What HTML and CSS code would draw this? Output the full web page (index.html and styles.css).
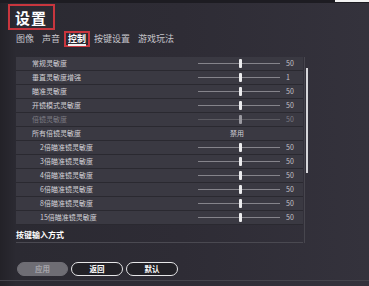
FILE: index.html
```html
<!DOCTYPE html>
<html lang="zh">
<head>
<meta charset="utf-8">
<link rel="stylesheet" href="styles.css">
</head>
<body>
<div class="screen">
  <div class="topbar"><div class="topbar-white"></div></div>
  <div class="title-box">设置</div>
  <div class="tabs">
    <div class="tab">图像</div>
    <div class="tab">声音</div>
    <div class="tab active"><span class="tab-u">控制</span></div>
    <div class="tab">按键设置</div>
    <div class="tab">游戏玩法</div>
  </div>
  <div class="main">
    <div class="panel">
      <div class="row"><div class="label">常规灵敏度</div><div class="slider"><div class="track-l"></div><div class="thumb"></div><div class="track-r"></div></div><div class="value">50</div></div>
      <div class="row"><div class="label">垂直灵敏度增强</div><div class="slider"><div class="track-l"></div><div class="thumb"></div><div class="track-r"></div></div><div class="value">1</div></div>
      <div class="row"><div class="label">瞄准灵敏度</div><div class="slider"><div class="track-l"></div><div class="thumb"></div><div class="track-r"></div></div><div class="value">50</div></div>
      <div class="row"><div class="label">开镜模式灵敏度</div><div class="slider"><div class="track-l"></div><div class="thumb"></div><div class="track-r"></div></div><div class="value">50</div></div>
      <div class="row dim"><div class="label">倍镜灵敏度</div><div class="slider"><div class="track-l"></div><div class="thumb"></div><div class="track-r"></div></div><div class="value">50</div></div>
      <div class="row"><div class="label">所有倍镜灵敏度</div><div class="toggle">禁用</div><div class="value"></div></div>
      <div class="row sub"><div class="label">2倍瞄准镜灵敏度</div><div class="slider"><div class="track-l"></div><div class="thumb"></div><div class="track-r"></div></div><div class="value">50</div></div>
      <div class="row sub"><div class="label">3倍瞄准镜灵敏度</div><div class="slider"><div class="track-l"></div><div class="thumb"></div><div class="track-r"></div></div><div class="value">50</div></div>
      <div class="row sub"><div class="label">4倍瞄准镜灵敏度</div><div class="slider"><div class="track-l"></div><div class="thumb"></div><div class="track-r"></div></div><div class="value">50</div></div>
      <div class="row sub"><div class="label">6倍瞄准镜灵敏度</div><div class="slider"><div class="track-l"></div><div class="thumb"></div><div class="track-r"></div></div><div class="value">50</div></div>
      <div class="row sub"><div class="label">8倍瞄准镜灵敏度</div><div class="slider"><div class="track-l"></div><div class="thumb"></div><div class="track-r"></div></div><div class="value">50</div></div>
      <div class="row sub"><div class="label">15倍瞄准镜灵敏度</div><div class="slider"><div class="track-l"></div><div class="thumb"></div><div class="track-r"></div></div><div class="value">50</div></div>
      <div class="section">按键输入方式</div>
    </div>
    <div class="scroll"><div class="scroll-thumb"></div></div>
  </div>
  <div class="buttons">
    <div class="btn disabled">应用</div>
    <div class="btn">返回</div>
    <div class="btn">默认</div>
  </div>
  <div class="bottom-line"></div>
</div>
</body>
</html>
```
FILE: styles.css
```css
html, body {
  margin: 0;
  padding: 0;
}
body {
  width: 369px;
  height: 286px;
  overflow: hidden;
  background: #2d2b34;
  font-family: "Noto Sans CJK SC", "Noto Sans", sans-serif;
  color: #d4d3d8;
}
.screen {
  width: 369px;
  height: 286px;
  background: linear-gradient(to right, #232228 0px, #2b2a32 16px, #2e2c35 180px, #34323c 369px);
  display: flex;
  flex-direction: column;
}
.topbar {
  height: 3px;
  background: #1d1c22;
  display: flex;
  justify-content: flex-end;
}
.topbar-white {
  width: 34px;
  height: 2px;
  background: #f2f2f2;
}
.title-box {
  margin: 1px 0 0 8px;
  width: 47px;
  height: 26px;
  box-sizing: border-box;
  border: 2px solid #c8363e;
  display: flex;
  align-items: center;
  padding-left: 5px;
  font-size: 15px;
  font-weight: 700;
  color: #ffffff;
  letter-spacing: 1px;
  line-height: 1;
}
.tabs {
  display: flex;
  margin: 1px 0 0 12px;
  height: 16px;
}
.tab {
  box-sizing: border-box;
  height: 16px;
  border: 2px solid transparent;
  padding: 0 2px;
  font-size: 9px;
  line-height: 10px;
  padding-top: 1px;
  color: #c6c5cb;
}
.tab.active {
  border-color: #c8363e;
  color: #ffffff;
  font-weight: 700;
}
.tab-u {
  display: inline-block;
  border-bottom: 2px solid #f0f0f0;
  padding-bottom: 0;
  line-height: 10px;
}
.main {
  display: flex;
  margin: 10px 0 0 16px;
}
.panel {
  width: 287px;
  display: flex;
  flex-direction: column;
}
.row {
  height: 14px;
  box-sizing: border-box;
  border-bottom: 1px solid #2a2930;
  background: #3a3942;
  display: grid;
  grid-template-columns: 182px 82px 1fr;
  align-items: center;
  font-size: 7px;
  line-height: 1;
}
.label {
  padding-left: 16px;
  color: #d2d1d6;
  white-space: nowrap;
}
.row.sub .label {
  padding-left: 24px;
}
.slider {
  display: flex;
  align-items: center;
  height: 13px;
}
.track-l {
  width: 41px;
  height: 1px;
  background: #85848b;
}
.track-r {
  flex: 1;
  height: 1px;
  background: #85848b;
}
.thumb {
  width: 3px;
  height: 9px;
  background: #ececee;
  border-radius: 1px;
}
.value {
  padding-left: 6px;
  color: #c4c3c9;
}
.toggle {
  text-align: center;
  color: #cfced4;
  padding-right: 4px;
}
.row.dim .label,
.row.dim .value {
  color: #7c7b82;
}
.row.dim .track-l,
.row.dim .track-r {
  background: #5c5b62;
}
.row.dim .thumb {
  background: #9a99a0;
}
.section {
  height: 18px;
  box-sizing: border-box;
  border-bottom: 1px solid #4a4951;
  font-size: 8px;
  font-weight: 700;
  color: #ffffff;
  display: flex;
  align-items: center;
  padding-top: 1px;
}
.scroll {
  margin-left: 1px;
  width: 3px;
  border-left: 1px solid #47464e;
}
.scroll-thumb {
  margin: 11px 0 0 1px;
  width: 2px;
  height: 105px;
  background: #d6d6da;
}
.buttons {
  display: flex;
  gap: 3px;
  margin: 19px 0 0 17px;
}
.btn {
  width: 52px;
  height: 14px;
  box-sizing: border-box;
  border: 1px solid #e6e6e8;
  border-radius: 7px;
  background: #222127;
  color: #ffffff;
  font-size: 7.5px;
  font-weight: 700;
  display: flex;
  align-items: center;
  justify-content: center;
  line-height: 1;
}
.btn.disabled {
  width: 51px;
  border-color: #6e6d74;
  background: #6e6d74;
  color: #a6a5ab;
}
.bottom-line {
  margin-top: 4px;
  height: 1px;
  background: #45444c;
}
```
